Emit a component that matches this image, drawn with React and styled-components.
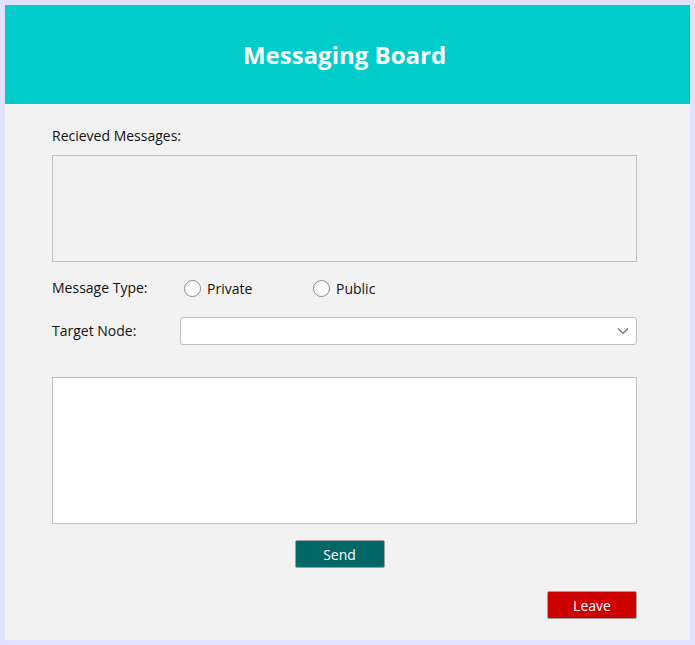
import React, { useState } from 'react';
import styled, { createGlobalStyle } from 'styled-components';

const GlobalStyle = createGlobalStyle`
  html, body {
    margin: 0;
    padding: 0;
    background: #e0e0ff;
  }
  body {
    font-family: "Open Sans", "Noto Sans", sans-serif;
    color: #111;
  }
`;

const Frame = styled.div`
  width: 695px;
  height: 645px;
  box-sizing: border-box;
  padding: 5px;
  background: #e0e0ff;
`;

const Board = styled.div`
  height: 100%;
  background: #f2f2f2;
  display: flex;
  flex-direction: column;
`;

const Header = styled.header`
  height: 99px;
  background: #00cccc;
  display: flex;
  align-items: center;
  justify-content: center;
`;

const Title = styled.h1`
  margin: 0;
  color: #fff;
  font-size: 24px;
  font-weight: 700;
  padding-right: 6px;
`;

const Body = styled.div`
  padding: 22px 53px 0 47px;
  display: flex;
  flex-direction: column;
`;

const Label = styled.label`
  font-size: 14px;
  line-height: 20px;
  width: ${p => p.$width || 'auto'};
  flex-shrink: 0;
`;

const ReceivedBox = styled.div`
  margin-top: 9px;
  height: 107px;
  box-sizing: border-box;
  border: 1px solid #c0c0c0;
  background: #f2f2f2;
`;

const Row = styled.div`
  display: flex;
  align-items: center;
  margin-top: ${p => p.$top}px;
`;

const RadioOption = styled.label`
  display: flex;
  align-items: center;
  gap: 6px;
  font-size: 14px;
  width: ${p => p.$width}px;
  cursor: pointer;
`;

const RadioCircle = styled.span`
  width: 17px;
  height: 17px;
  box-sizing: border-box;
  border-radius: 50%;
  border: 1px solid #8a8a8a;
  background: #fff;
  display: flex;
  align-items: center;
  justify-content: center;

  &::after {
    content: '';
    width: 8px;
    height: 8px;
    border-radius: 50%;
    background: ${p => (p.$checked ? '#333' : 'transparent')};
  }
`;

const SelectBox = styled.div`
  flex: 1;
  height: 28px;
  box-sizing: border-box;
  border: 1px solid #c0c0c0;
  border-radius: 3px;
  background: #fff;
  display: flex;
  align-items: center;
  justify-content: flex-end;
  padding-right: 6px;
`;

const MessageInput = styled.textarea`
  margin-top: 32px;
  height: 147px;
  box-sizing: border-box;
  border: 1px solid #c0c0c0;
  background: #fff;
  resize: none;
  outline: none;
  font-family: inherit;
  font-size: 14px;
`;

const Button = styled.button`
  width: 90px;
  height: 28px;
  border: 1px solid #a0a0a0;
  border-radius: 2px;
  background: ${p => p.$bg};
  color: #fff;
  font-family: inherit;
  font-size: 14px;
  padding: 0;
  cursor: pointer;
`;

const SendRow = styled.div`
  display: flex;
  justify-content: center;
  margin-top: 16px;
  padding-right: 10px;
`;

const LeaveRow = styled.div`
  display: flex;
  justify-content: flex-end;
  margin-top: 23px;
`;

const Chevron = () => (
  <svg width="14" height="14" viewBox="0 0 14 14" fill="none">
    <path d="M2 4.5 L7 9.5 L12 4.5" stroke="#666" strokeWidth="1.2" />
  </svg>
);

export default function App() {
  const [type, setType] = useState(null);
  return (
    <>
      <GlobalStyle />
      <Frame>
        <Board>
          <Header>
            <Title>Messaging Board</Title>
          </Header>
          <Body>
            <Label>Recieved Messages:</Label>
            <ReceivedBox />
            <Row $top={16}>
              <Label $width="132px">Message Type:</Label>
              <RadioOption $width={129} onClick={() => setType('private')}>
                <RadioCircle $checked={type === 'private'} />
                Private
              </RadioOption>
              <RadioOption $width={100} onClick={() => setType('public')}>
                <RadioCircle $checked={type === 'public'} />
                Public
              </RadioOption>
            </Row>
            <Row $top={19}>
              <Label $width="128px">Target Node:</Label>
              <SelectBox>
                <Chevron />
              </SelectBox>
            </Row>
            <MessageInput />
            <SendRow>
              <Button $bg="#006666">Send</Button>
            </SendRow>
            <LeaveRow>
              <Button $bg="#cc0000">Leave</Button>
            </LeaveRow>
          </Body>
        </Board>
      </Frame>
    </>
  );
}
